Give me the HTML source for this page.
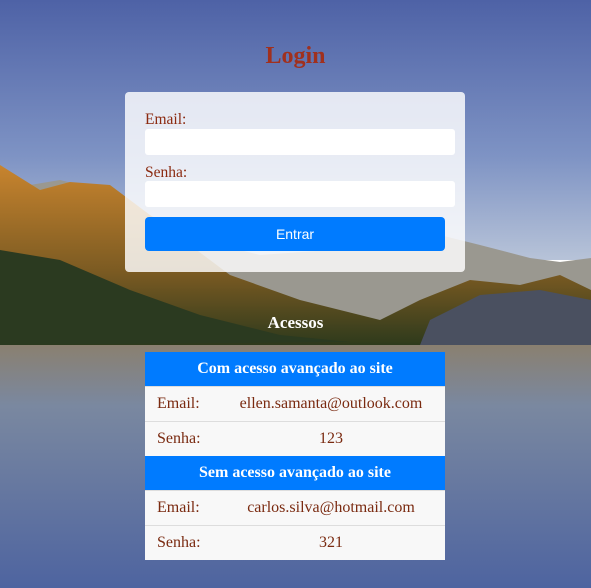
<!DOCTYPE html>
<html><head><meta charset="utf-8"><style>
html,body{margin:0;padding:0;width:591px;height:588px;overflow:hidden;font-family:"Liberation Serif",serif;}
#bg{position:absolute;left:0;top:0;width:591px;height:588px;z-index:0}
.c{position:absolute;z-index:1}
h1{position:absolute;left:0;width:591px;top:43px;margin:0;text-align:center;font-size:24px;color:#a0301e;font-weight:bold}
.box{left:125px;top:92px;width:340px;height:180px;background:rgba(255,255,255,0.82);border-radius:4px}
.lbl{position:absolute;left:20px;font-size:15.5px;color:#8b2a10}
.inp{position:absolute;left:20px;width:310px;height:26px;background:#fff;border-radius:3px}
.btn{position:absolute;left:20px;top:125px;width:300px;height:34px;background:#007bff;border-radius:4px;color:#fff;font-family:"Liberation Sans",sans-serif;font-size:14px;text-align:center;line-height:34px}
h2{position:absolute;left:0;width:591px;top:313px;margin:0;text-align:center;font-size:17px;color:#fff;font-weight:bold}
table{position:absolute;left:145px;top:352px;width:300px;border-collapse:collapse;z-index:1;font-size:16px}
td{height:34px;padding:0;color:#7a2a10;background:#f8f8f8;border-top:1px solid #ddd}
th{height:34px;background:#007bff;color:#fff;font-size:16px;padding:0}
td.l{padding-left:12px;width:60px}
td.r{text-align:center}
</style></head><body>
<svg id="bg" width="591" height="588" viewBox="0 0 591 588">
<defs>
<linearGradient id="sky" x1="0" y1="0" x2="0" y2="1"><stop offset="0" stop-color="#4e62a6"/><stop offset="0.6" stop-color="#7e93c4"/><stop offset="1" stop-color="#b7c3d8"/></linearGradient>
<linearGradient id="wat" x1="0" y1="0" x2="0" y2="1"><stop offset="0" stop-color="#8a8070"/><stop offset="0.25" stop-color="#7a88a0"/><stop offset="1" stop-color="#4e64a0"/></linearGradient>
<linearGradient id="mt" x1="0" y1="0" x2="0" y2="1"><stop offset="0" stop-color="#c8842e"/><stop offset="0.6" stop-color="#7a5a22"/><stop offset="1" stop-color="#2e3a1c"/></linearGradient>
</defs>
<rect width="591" height="260" fill="url(#sky)"/>
<polygon points="0,165 30,185 60,180 100,190 150,215 200,240 260,255 330,250 390,240 440,235 480,245 530,258 560,262 591,258 591,345 0,345" fill="#9a9890"/>
<polygon points="0,165 40,190 70,182 110,185 150,215 190,245 230,275 300,300 380,320 420,300 470,280 520,285 560,275 591,290 591,345 0,345" fill="url(#mt)"/>
<polygon points="0,250 60,260 130,290 200,315 280,335 350,342 0,345" fill="#2b3a20"/>
<polygon points="430,320 480,295 540,290 591,300 591,345 420,345" fill="#4a5060"/>
<rect y="345" width="591" height="243" fill="url(#wat)"/>
</svg>
<h1 class="c">Login</h1>
<div class="c box">
<div class="lbl" style="top:19px">Email:</div>
<div class="inp" style="top:37px"></div>
<div class="lbl" style="top:72px">Senha:</div>
<div class="inp" style="top:89px"></div>
<div class="btn">Entrar</div>
</div>
<h2 class="c">Acessos</h2>
<table>
<tr><th colspan="2">Com acesso avançado ao site</th></tr>
<tr><td class="l">Email:</td><td class="r">ellen.samanta@outlook.com</td></tr>
<tr><td class="l">Senha:</td><td class="r">123</td></tr>
<tr><th colspan="2">Sem acesso avançado ao site</th></tr>
<tr><td class="l">Email:</td><td class="r">carlos.silva@hotmail.com</td></tr>
<tr><td class="l">Senha:</td><td class="r">321</td></tr>
</table>
</body></html>
